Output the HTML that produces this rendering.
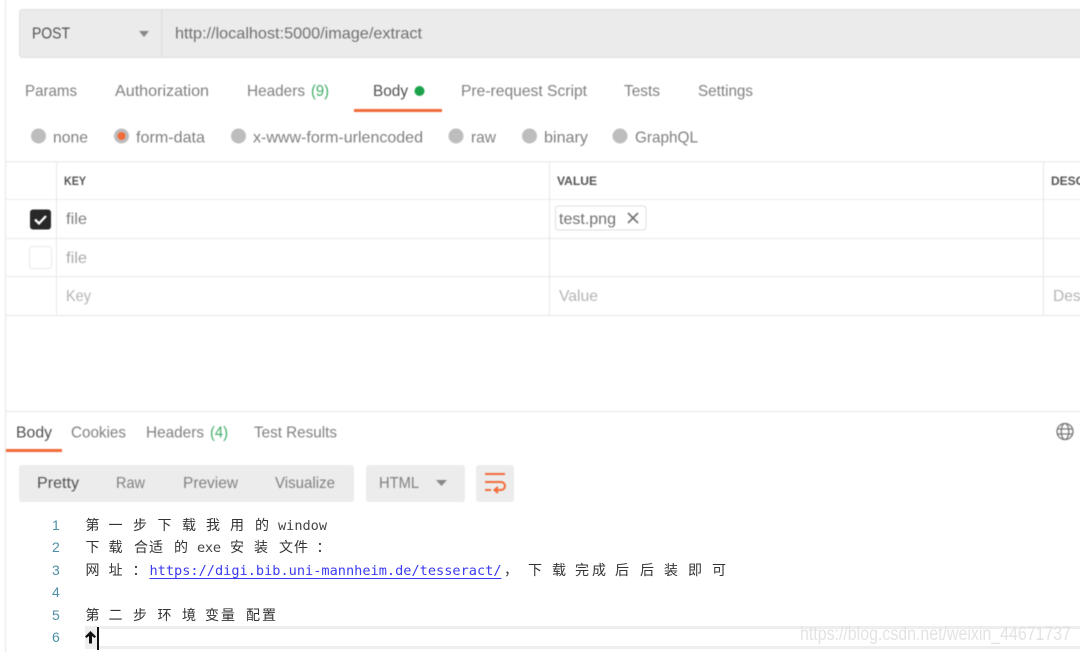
<!DOCTYPE html>
<html><head><meta charset="utf-8"><style>
html,body{margin:0;padding:0;background:#fff;width:1080px;height:652px;overflow:hidden}
svg{display:block;position:absolute;left:0;top:0}
.u{font-family:"Liberation Sans",sans-serif;font-size:15.6px;fill:#808080}
.d{fill:#505050}
.g{fill:#3fae66}
.b{font-weight:bold;font-size:12px;fill:#555}
.ph{fill:#b4b4b4}
.c{font-family:"Liberation Sans","Noto Sans CJK SC",sans-serif;font-size:14px;fill:#333}
.m{font-family:"DejaVu Sans Mono",monospace;font-size:13.6px;fill:#444}
.n{font-family:"Liberation Sans",sans-serif;font-size:14px;fill:#4f8fa6}
</style></head><body>
<svg width="1080" height="652" viewBox="0 0 1080 652" xmlns="http://www.w3.org/2000/svg">
<g style="filter:blur(0.4px)">
<rect x="5" y="0" width="1" height="652" fill="#e4e4e4"/>
<rect x="19.5" y="9.5" width="1080" height="48" rx="3" fill="#ebebeb" stroke="#e0e0e0"/>
<rect x="161" y="10" width="1.5" height="47" fill="#e0e0e0"/>
<text class="u d" x="32" y="38.500" textLength="38" lengthAdjust="spacingAndGlyphs">POST</text>
<path d="M139 31h10l-5 6z" fill="#888"/>
<text class="u" x="175" y="38.500" style="fill:#707070" textLength="247" lengthAdjust="spacingAndGlyphs">http://localhost:5000/image/extract</text>

<text class="u" x="25" y="96" textLength="52" lengthAdjust="spacingAndGlyphs">Params</text>
<text class="u" x="115" y="96" textLength="94" lengthAdjust="spacingAndGlyphs">Authorization</text>
<text class="u" x="247" y="96" textLength="58" lengthAdjust="spacingAndGlyphs">Headers</text>
<text class="u g" x="311" y="96" textLength="18" lengthAdjust="spacingAndGlyphs">(9)</text>
<text class="u d" x="373" y="96" textLength="35" lengthAdjust="spacingAndGlyphs">Body</text>
<circle cx="419.500" cy="91" r="5" fill="#1ca24b"/>
<rect x="354" y="109" width="88" height="3" fill="#f26b3a"/>
<text class="u" x="461" y="96" textLength="126" lengthAdjust="spacingAndGlyphs">Pre-request Script</text>
<text class="u" x="624" y="96" textLength="36" lengthAdjust="spacingAndGlyphs">Tests</text>
<text class="u" x="698" y="96" textLength="55" lengthAdjust="spacingAndGlyphs">Settings</text>

<circle cx="38.500" cy="136" r="7.500" fill="#bdbdbd"/>
<text class="u" x="53" y="142.500" textLength="35" lengthAdjust="spacingAndGlyphs">none</text>
<circle cx="121.500" cy="136" r="7.500" fill="#bdbdbd"/>
<circle cx="121.500" cy="136" r="4" fill="#f26b3a"/>
<text class="u" x="136" y="142.500" textLength="69" lengthAdjust="spacingAndGlyphs">form-data</text>
<circle cx="238.500" cy="136" r="7.500" fill="#bdbdbd"/>
<text class="u" x="253" y="142.500" textLength="170" lengthAdjust="spacingAndGlyphs">x-www-form-urlencoded</text>
<circle cx="456" cy="136" r="7.500" fill="#bdbdbd"/>
<text class="u" x="471" y="142.500" textLength="25" lengthAdjust="spacingAndGlyphs">raw</text>
<circle cx="529.500" cy="136" r="7.500" fill="#bdbdbd"/>
<text class="u" x="544" y="142.500" textLength="44" lengthAdjust="spacingAndGlyphs">binary</text>
<circle cx="620" cy="136" r="7.500" fill="#bdbdbd"/>
<text class="u" x="635" y="142.500" textLength="63" lengthAdjust="spacingAndGlyphs">GraphQL</text>

<rect x="6" y="161" width="1074" height="1.500" fill="#eeeeee"/>
<rect x="6" y="199" width="1074" height="1" fill="#eeeeee"/>
<rect x="6" y="238" width="1074" height="1" fill="#e9e9e9"/>
<rect x="6" y="276" width="1074" height="1" fill="#e9e9e9"/>
<rect x="6" y="315" width="1074" height="1" fill="#e6e6e6"/>
<rect x="56" y="162" width="1" height="153" fill="#e9e9e9"/>
<rect x="549" y="162" width="1" height="153" fill="#e6e6e6"/>
<rect x="1043" y="162" width="1" height="153" fill="#e6e6e6"/>

<text class="u b" x="64" y="185" textLength="22" lengthAdjust="spacingAndGlyphs">KEY</text>
<text class="u b" x="557" y="185" textLength="40" lengthAdjust="spacingAndGlyphs">VALUE</text>
<text class="u b" x="1051" y="185">DESC</text>

<rect x="30" y="209.500" width="21" height="20" rx="3" fill="#282828"/>
<path d="M35 219.500l4 4 7-7.500" fill="none" stroke="#fff" stroke-width="2.300"/>
<rect x="29.500" y="246.500" width="22" height="22" rx="3" fill="#fff" stroke="#e9e9e9"/>
<text class="u" x="66" y="224" textLength="21" lengthAdjust="spacingAndGlyphs">file</text>
<text class="u" x="66" y="263" style="fill:#aaa" textLength="21" lengthAdjust="spacingAndGlyphs">file</text>
<text class="u ph" x="66" y="301" textLength="25" lengthAdjust="spacingAndGlyphs">Key</text>
<text class="u ph" x="559" y="301" textLength="39" lengthAdjust="spacingAndGlyphs">Value</text>
<text class="u ph" x="1053" y="301">Des</text>
<rect x="555.500" y="206" width="90.500" height="24" rx="3" fill="#fff" stroke="#dedede"/>
<text class="u" x="559" y="224" style="fill:#707070" textLength="57" lengthAdjust="spacingAndGlyphs">test.png</text>
<path d="M628 213l10 10M638 213l-10 10" stroke="#707070" stroke-width="1.600" fill="none"/>

<rect x="6" y="411" width="1074" height="1" fill="#e4e4e4"/>
<text class="u d" x="16" y="437.500" textLength="36" lengthAdjust="spacingAndGlyphs">Body</text>
<rect x="6" y="449" width="56" height="3" fill="#f26b3a"/>
<text class="u" x="71" y="437.500" textLength="55" lengthAdjust="spacingAndGlyphs">Cookies</text>
<text class="u" x="146" y="437.500" textLength="58" lengthAdjust="spacingAndGlyphs">Headers</text>
<text class="u g" x="210" y="437.500" textLength="18" lengthAdjust="spacingAndGlyphs">(4)</text>
<text class="u" x="254" y="437.500" textLength="83" lengthAdjust="spacingAndGlyphs">Test Results</text>
<g fill="none" stroke="#777" stroke-width="1.300">
<circle cx="1065" cy="431.500" r="8"/>
<ellipse cx="1065" cy="431.500" rx="3.800" ry="8"/>
<path d="M1057.500 429h15M1057.500 434h15"/>
</g>

<rect x="19" y="465" width="335" height="37" rx="3" fill="#ececec"/>
<text class="u d" x="37" y="488" textLength="42" lengthAdjust="spacingAndGlyphs">Pretty</text>
<text class="u" x="116" y="488" textLength="29" lengthAdjust="spacingAndGlyphs">Raw</text>
<text class="u" x="183" y="488" textLength="55" lengthAdjust="spacingAndGlyphs">Preview</text>
<text class="u" x="275" y="488" textLength="60" lengthAdjust="spacingAndGlyphs">Visualize</text>
<rect x="366" y="465" width="99" height="37" rx="3" fill="#ececec"/>
<text class="u" x="379" y="488" textLength="40" lengthAdjust="spacingAndGlyphs">HTML</text>
<path d="M436 480h11l-5.500 6z" fill="#888"/>
<rect x="476" y="465" width="38" height="37" rx="3" fill="#ececec"/>
<g fill="none" stroke="#f26b3a" stroke-width="2">
<path d="M485 474h20M485 482h16a3.500 3.500 0 0 1 0 8h-6"/>
<path d="M485 490h6"/>
<path d="M498 487l-3.500 3 3.500 3"/>
</g>
</g>

<g>
<text class="n" x="52" y="530">1</text>
<text class="n" x="52" y="552">2</text>
<text class="n" x="52" y="575">3</text>
<text class="n" x="52" y="597">4</text>
<text class="n" x="52" y="620">5</text>
<text class="n" x="52" y="642">6</text>

<text class="c" x="85.500" y="530">第</text><text class="c" x="108.500" y="530">一</text><text class="c" x="133" y="530">步</text><text class="c" x="157.500" y="530">下</text><text class="c" x="182" y="530">载</text><text class="c" x="206" y="530">我</text><text class="c" x="230" y="530">用</text><text class="c" x="255" y="530">的</text>
<text class="m" x="278" y="530" textLength="49">window</text>

<text class="c" x="85.500" y="552">下</text><text class="c" x="108.500" y="552">载</text><text class="c" x="134" y="552" textLength="29">合适</text><text class="c" x="174" y="552">的</text>
<text class="m" x="197" y="552" textLength="24">exe</text>
<text class="c" x="230" y="552">安</text><text class="c" x="254" y="552">装</text><text class="c" x="279" y="552" textLength="29">文件</text><text class="c" x="316.500" y="552">：</text>

<text class="c" x="85.500" y="575">网</text><text class="c" x="108.500" y="575">址</text><text class="c" x="132.500" y="575">：</text>
<text class="m" x="149.500" y="575" textLength="352" style="fill:#3b3bf2">https://digi.bib.uni-mannheim.de/tesseract/</text>
<rect x="149.500" y="578" width="352" height="1" fill="#3b3bf2"/>
<text class="c" x="504" y="575">，</text>
<text class="c" x="528" y="575">下</text><text class="c" x="552" y="575">载</text><text class="c" x="575" y="575" textLength="31">完成</text><text class="c" x="615" y="575">后</text><text class="c" x="640" y="575">后</text><text class="c" x="664" y="575">装</text><text class="c" x="688" y="575">即</text><text class="c" x="712" y="575">可</text>

<text class="c" x="85.500" y="620">第</text><text class="c" x="108.500" y="620">二</text><text class="c" x="133" y="620">步</text><text class="c" x="157.500" y="620">环</text><text class="c" x="182" y="620">境</text><text class="c" x="205" y="620" textLength="30">变量</text><text class="c" x="246" y="620" textLength="30">配置</text>

<rect x="85" y="626" width="995" height="3" fill="#eeeeee"/>
<rect x="85" y="646" width="995" height="3" fill="#eeeeee"/>
<rect x="85" y="626" width="13" height="23" fill="#eeeeee"/>
<path d="M90.500 631l-5.500 5.500 1.500 1.500 2.500-2v7.500h3v-7.500l2.500 2 1.500-1.500z" fill="#111"/>
<rect x="97" y="627" width="2" height="23" fill="#111"/>

<text x="800" y="640" textLength="271" lengthAdjust="spacingAndGlyphs" style="font-family:'Liberation Sans',sans-serif;font-size:19px;fill:#e3e3e3">https://blog.csdn.net/weixin_44671737</text>
</g>
</svg>
</body></html>
